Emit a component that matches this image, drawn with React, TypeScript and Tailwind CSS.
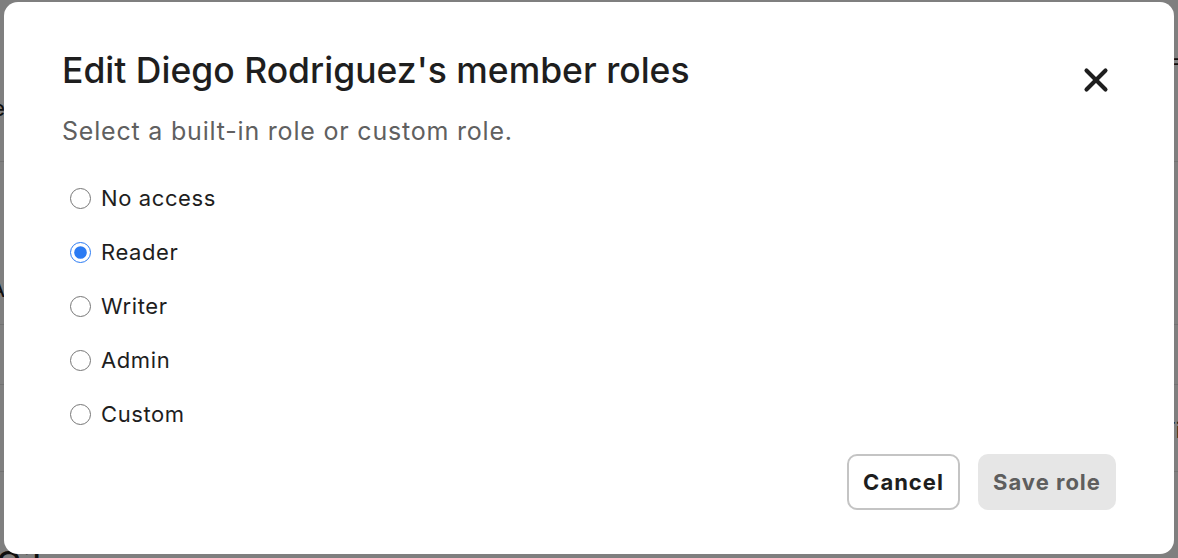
import React, { useState } from "react";
import { X } from "lucide-react";

const roles = ["No access", "Reader", "Writer", "Admin", "Custom"];

const BackgroundPage: React.FC = () => {
  return (
    <div className="h-full w-full bg-white text-[#1f1f1f] font-['Inter',sans-serif] text-[22px]">
      <div className="h-[162px] border-b border-[#e5e5e5] flex justify-between">
        <span className="-ml-[56px] mt-[94px] leading-[28px]">Name</span>
        <span className="-mr-[8px] mt-[46px] leading-[28px]">=</span>
      </div>
      <div className="h-[163px] border-b border-[#e5e5e5] flex">
        <span className="-ml-[10px] mt-[113px] leading-[28px]">Ac</span>
      </div>
      <div className="h-[60px] border-b border-[#e5e5e5]" />
      <div className="h-[87px] border-b border-[#e5e5e5] flex justify-end">
        <span className="-mr-[3px] mt-[31px] leading-[28px]">Ti</span>
      </div>
      <div className="pt-[74px]">
        <span className="text-[40px] -ml-[4px] leading-none">Sites</span>
      </div>
    </div>
  );
};

export default function App() {
  const [role, setRole] = useState("Reader");

  return (
    <div className="relative h-[558px] w-full overflow-hidden">
      <BackgroundPage />
      <div className="absolute inset-0 bg-black/50 pl-[4px] pt-[2px]">
        <div className="w-[1170px] h-[552px] bg-white rounded-[14px] pl-[58px] pr-[58px] pt-[46px] pb-[44px] flex flex-col font-['Inter',sans-serif]">
          <div className="flex items-start justify-between">
            <h2 className="text-[35.5px] font-medium leading-[46px] text-[#1e1e1e]">
              Edit Diego Rodriguez's member roles
            </h2>
            <button className="mt-[13px] mr-[1px] text-[#1e1e1e]" aria-label="Close">
              <X size={38} strokeWidth={2.6} />
            </button>
          </div>
          <p className="mt-[16px] text-[25px] leading-[32px] tracking-[0.8px] text-[#606060]">
            Select a built-in role or custom role.
          </p>

          <div className="mt-[35px] flex flex-col gap-[22px] pl-[8px]">
            {roles.map((r) => (
              <label key={r} className="flex items-center gap-[10px] h-[32px] cursor-pointer">
                <input
                  type="radio"
                  name="role"
                  checked={role === r}
                  onChange={() => setRole(r)}
                  className="w-[21px] h-[21px] m-0 accent-[#2b7bf3]"
                />
                <span className="text-[22px] text-[#1e1e1e] tracking-[0.6px]">{r}</span>
              </label>
            ))}
          </div>

          <div className="mt-auto flex justify-end gap-[18px]">
            <button className="h-[56px] w-[113px] rounded-[10px] border-2 border-[#c4c4c4] bg-white text-[22px] font-bold tracking-[1px] text-[#1e1e1e]">
              Cancel
            </button>
            <button
              disabled
              className="h-[56px] w-[138px] rounded-[10px] bg-[#e6e6e6] text-[22px] font-bold tracking-[1px] text-[#5e5e5e]"
            >
              Save role
            </button>
          </div>
        </div>
      </div>
    </div>
  );
}
